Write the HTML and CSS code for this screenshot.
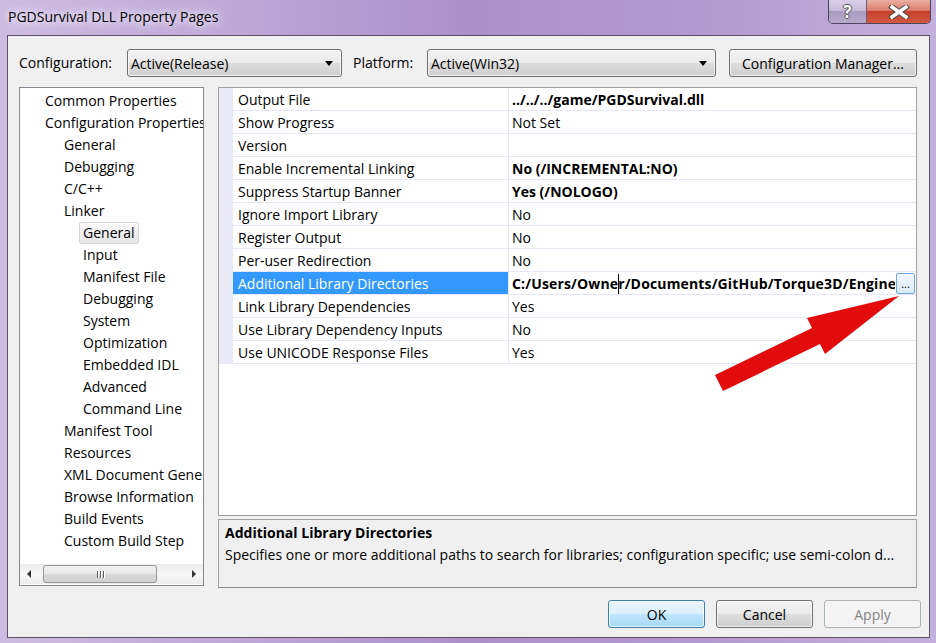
FILE: index.html
```html
<!DOCTYPE html>
<html>
<head>
<meta charset="utf-8">
<title>PGDSurvival DLL Property Pages</title>
<link rel="stylesheet" href="styles.css">
</head>
<body>
<div class="window">
  <div class="titlebar">
    <div class="title">PGDSurvival DLL Property Pages</div>
    <div class="caption-btns">
      <div class="cap help">?</div>
      <div class="cap close">
        <svg width="22" height="14" viewBox="0 0 22 14"><path d="M4 2 L18 12 M18 2 L4 12" stroke="#4a4a4a" stroke-width="5.5" stroke-linecap="square"/><path d="M4 2 L18 12 M18 2 L4 12" stroke="#ffffff" stroke-width="3.5" stroke-linecap="square"/></svg>
      </div>
    </div>
  </div>
  <div class="client">
    <div class="toolbar">
      <span class="lbl lbl-config">Configuration:</span>
      <div class="combo combo-config"><span class="combo-text">Active(Release)</span><span class="drop"></span></div>
      <span class="lbl lbl-platform">Platform:</span>
      <div class="combo combo-platform"><span class="combo-text">Active(Win32)</span><span class="drop"></span></div>
      <div class="btn btn-cfgmgr">Configuration Manager...</div>
    </div>
    <div class="main">
      <div class="tree">
        <ul class="tree-list">
          <li class="l1">Common Properties</li>
          <li class="l1">Configuration Properties</li>
          <li class="l2">General</li>
          <li class="l2">Debugging</li>
          <li class="l2">C/C++</li>
          <li class="l2">Linker</li>
          <li class="l3"><span class="sel">General</span></li>
          <li class="l3">Input</li>
          <li class="l3">Manifest File</li>
          <li class="l3">Debugging</li>
          <li class="l3">System</li>
          <li class="l3">Optimization</li>
          <li class="l3">Embedded IDL</li>
          <li class="l3">Advanced</li>
          <li class="l3">Command Line</li>
          <li class="l2">Manifest Tool</li>
          <li class="l2">Resources</li>
          <li class="l2">XML Document Generator</li>
          <li class="l2">Browse Information</li>
          <li class="l2">Build Events</li>
          <li class="l2">Custom Build Step</li>
        </ul>
        <div class="hscroll">
          <div class="hs-arrow"><span class="tri-left"></span></div>
          <div class="hs-thumb"><span class="grip"></span><span class="grip"></span><span class="grip"></span></div>
          <div class="hs-space"></div>
          <div class="hs-arrow hs-right"><span class="tri-right"></span></div>
        </div>
      </div>
      <div class="right">
        <div class="grid">
          <div class="row"><div class="gut"></div><div class="name">Output File</div><div class="val b">../../../game/PGDSurvival.dll</div></div>
          <div class="row"><div class="gut"></div><div class="name">Show Progress</div><div class="val">Not Set</div></div>
          <div class="row"><div class="gut"></div><div class="name">Version</div><div class="val"></div></div>
          <div class="row"><div class="gut"></div><div class="name">Enable Incremental Linking</div><div class="val b">No (/INCREMENTAL:NO)</div></div>
          <div class="row"><div class="gut"></div><div class="name">Suppress Startup Banner</div><div class="val b">Yes (/NOLOGO)</div></div>
          <div class="row"><div class="gut"></div><div class="name">Ignore Import Library</div><div class="val">No</div></div>
          <div class="row"><div class="gut"></div><div class="name">Register Output</div><div class="val">No</div></div>
          <div class="row"><div class="gut"></div><div class="name">Per-user Redirection</div><div class="val">No</div></div>
          <div class="row selected"><div class="gut"></div><div class="name">Additional Library Directories</div><div class="val b edit"><span class="edit-text">C:/Users/Owne<span class="caret"></span>r/Documents/GitHub/Torque3D/Engine</span><span class="ellipsis">...</span></div></div>
          <div class="row"><div class="gut"></div><div class="name">Link Library Dependencies</div><div class="val">Yes</div></div>
          <div class="row"><div class="gut"></div><div class="name">Use Library Dependency Inputs</div><div class="val">No</div></div>
          <div class="row"><div class="gut"></div><div class="name">Use UNICODE Response Files</div><div class="val">Yes</div></div>
        </div>
        <div class="desc">
          <div class="desc-title">Additional Library Directories</div>
          <div class="desc-text">Specifies one or more additional paths to search for libraries; configuration specific; use semi-colon d...</div>
        </div>
      </div>
    </div>
    <div class="buttons">
      <div class="btn dlg default">OK</div>
      <div class="btn dlg">Cancel</div>
      <div class="btn dlg disabled">Apply</div>
    </div>
  </div>
  <svg class="arrow" width="936" height="643" viewBox="0 0 936 643">
    <polygon points="899,296 825,354 820,344 723,391 715,375 812,328 807,318" fill="#e20c0c"/>
  </svg>
</div>
</body>
</html>
```
FILE: styles.css
```css
* { box-sizing: border-box; margin: 0; padding: 0; }
html, body { width: 936px; height: 643px; overflow: hidden; }
body {
  font-family: "Open Sans", "Noto Sans", sans-serif;
  font-size: 14px;
  color: #000;
  background: #b49bcf;
}
.window {
  position: relative;
  width: 936px;
  height: 643px;
  padding: 0 6px 5px 7px;
  display: flex;
  flex-direction: column;
  background: linear-gradient(90deg, #cdbce2 0%, #bea8d7 25%, #ab90c8 50%, #b39ace 75%, #c4b0dc 100%);
}
.titlebar {
  height: 35px;
  display: flex;
  align-items: flex-start;
  margin: 0 -6px 0 -7px;
}
.title {
  padding: 6px 0 0 8px;
  line-height: 22px;
  font-size: 14px;
  color: #000;
  text-shadow: 0 0 6px #f0e8f8, 0 0 10px #f0e8f8, 0 0 14px #e8def4;
}
.caption-btns {
  margin-left: auto;
  margin-right: 5px;
  display: flex;
  height: 24px;
  border: 1px solid #4d4260;
  border-top: none;
  border-radius: 0 0 5px 5px;
  overflow: hidden;
}
.cap {
  height: 23px;
  display: flex;
  align-items: center;
  justify-content: center;
}
.help {
  width: 38px;
  border-right: 1px solid #6a5d7c;
  background: linear-gradient(#d9cfe6 0%, #c8bcd9 45%, #a99bbd 50%, #b6a9c9 100%);
  color: #fff;
  font-weight: bold;
  font-size: 17px;
  text-shadow: -1px 0 #555, 1px 0 #555, 0 -1px #555, 0 1px #555;
}
.close {
  width: 63px;
  background: linear-gradient(#eab0a3 0%, #dc7d6b 45%, #c6412d 50%, #d45841 100%);
}
.client {
  flex: 1;
  border: 1px solid #5b4f6a;
  background: #f0f0f0;
  display: flex;
  flex-direction: column;
}
.toolbar {
  margin-top: 13px;
  height: 28px;
  padding-left: 11px;
  display: flex;
  align-items: center;
}
.lbl { display: block; line-height: 28px; }
.lbl-config { width: 108px; }
.lbl-platform { width: 74px; margin-left: 11px; }
.combo, .btn {
  height: 28px;
  border: 1px solid #707070;
  border-radius: 3px;
  background: linear-gradient(#f2f2f2 0%, #ebebeb 50%, #dddddd 51%, #cfcfcf 100%);
  box-shadow: inset 0 0 0 1px rgba(255,255,255,0.7);
}
.combo {
  display: flex;
  align-items: center;
  padding-left: 3px;
}
.combo-text { flex: 1; }
.combo-config { width: 215px; }
.combo-platform { width: 289px; }
.drop {
  width: 0; height: 0;
  border-left: 4px solid transparent;
  border-right: 4px solid transparent;
  border-top: 5px solid #000;
  margin-right: 8px;
}
.btn {
  display: flex;
  align-items: center;
  justify-content: center;
}
.btn-cfgmgr { width: 188px; margin-left: 13px; }
.main {
  margin-top: 10px;
  height: 501px;
  padding-left: 11px;
  display: flex;
}
.tree {
  width: 185px;
  height: 499px;
  border: 1px solid #828790;
  background: #fff;
  display: flex;
  flex-direction: column;
  overflow: hidden;
}
.tree-list {
  list-style: none;
  padding-top: 2px;
  flex: 1;
  overflow: hidden;
}
.tree-list li {
  height: 22px;
  line-height: 22px;
  white-space: nowrap;
}
.l1 { padding-left: 25px; }
.l2 { padding-left: 44px; }
.l3 { padding-left: 63px; }
.sel {
  display: inline-block;
  height: 22px;
  line-height: 20px;
  margin-left: -4px;
  padding: 0 3px;
  border: 1px solid #d5d5d5;
  border-radius: 2px;
  background: linear-gradient(#fafafa, #e6e6e6);
}
.hscroll {
  height: 20px;
  margin-bottom: 1px;
  display: flex;
  align-items: center;
  background: linear-gradient(#ececec, #f6f6f6 50%, #ececec);
}
.hs-arrow {
  width: 17px;
  height: 20px;
  display: flex;
  align-items: center;
  justify-content: center;
}
.hs-right { width: 19px; }
.tri-left {
  width: 0; height: 0;
  border-top: 4px solid transparent;
  border-bottom: 4px solid transparent;
  border-right: 4px solid #333;
}
.tri-right {
  width: 0; height: 0;
  border-top: 4px solid transparent;
  border-bottom: 4px solid transparent;
  border-left: 4px solid #333;
}
.hs-thumb {
  margin-left: 6px;
  width: 114px;
  height: 18px;
  border: 1px solid #979797;
  border-radius: 3px;
  background: linear-gradient(#f3f3f3 0%, #e8e8e8 50%, #d9d9d9 51%, #d2d2d2 100%);
  display: flex;
  align-items: center;
  justify-content: center;
  gap: 2px;
}
.grip {
  width: 1px;
  height: 7px;
  background: #5a5a5a;
  box-shadow: 1px 0 #fff;
}
.hs-space { flex: 1; }
.right {
  margin-left: 14px;
  width: 699px;
  display: flex;
  flex-direction: column;
}
.grid {
  height: 429px;
  border: 1px solid #a0a0a0;
  background: #fff;
}
.row {
  display: flex;
  height: 23px;
}
.gut {
  width: 14px;
  background: #eaeaf7;
}
.name {
  width: 276px;
  padding: 1px 0 0 5px;
  line-height: 21px;
  border-bottom: 1px solid #e6e6f4;
  border-right: 1px solid #e6e6f4;
  white-space: nowrap;
  overflow: hidden;
}
.val {
  flex: 1;
  padding: 1px 0 0 3px;
  line-height: 21px;
  border-bottom: 1px solid #e6e6f4;
  white-space: nowrap;
  overflow: hidden;
}
.b { font-weight: bold; }
.selected .name {
  background: #3399ff;
  color: #fff;
}
.edit {
  display: flex;
  align-items: center;
  padding: 0 1px 0 3px;
}
.edit-text {
  flex: 1;
  min-width: 0;
  overflow: hidden;
  white-space: nowrap;
  letter-spacing: 0.15px;
}
.caret {
  display: inline-block;
  width: 0;
  height: 20px;
  border-left: 1px solid #000;
  vertical-align: -5px;
  margin-right: -1px;
}
.ellipsis {
  width: 19px;
  height: 21px;
  flex: none;
  border: 1px solid #6fa7de;
  border-radius: 2px;
  background: linear-gradient(#f2f8fd, #dbeafa);
  font-weight: normal;
  font-size: 11px;
  line-height: 20px;
  letter-spacing: 0;
  text-align: center;
  margin-left: 1px;
}
.desc {
  margin-top: 3px;
  height: 69px;
  border: 1px solid #a0a0a0;
  border-bottom-color: #8a8a8a;
  background: #f0f0f0;
  padding: 2px 0 0 6px;
}
.desc-title {
  font-weight: bold;
  line-height: 22px;
}
.desc-text {
  line-height: 21px;
  white-space: nowrap;
  overflow: hidden;
}
.buttons {
  margin-top: 12px;
  height: 28px;
  padding-right: 8px;
  display: flex;
  justify-content: flex-end;
  gap: 11px;
}
.dlg { width: 97px; height: 28px; }
.default {
  border-color: #3c7fb1;
  background: linear-gradient(#eaf6fd 0%, #d9f0fc 50%, #bee6fd 51%, #a7d9f5 100%);
}
.disabled {
  border-color: #adb2b5;
  background: #f4f4f4;
  color: #838383;
  box-shadow: none;
}
.arrow {
  position: absolute;
  left: 0;
  top: 0;
  pointer-events: none;
}
```
